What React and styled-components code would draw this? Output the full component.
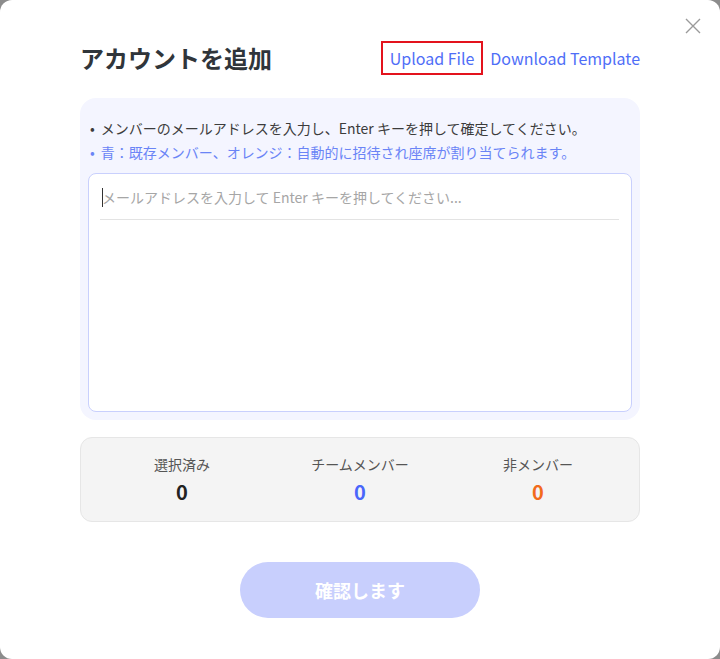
import React from 'react'
import styled, { createGlobalStyle } from 'styled-components'

const GlobalStyle = createGlobalStyle`
  html, body {
    margin: 0;
    padding: 0;
    background: #8c8c8c;
  }
  * { box-sizing: border-box; }
`

const Modal = styled.div`
  position: relative;
  width: 720px;
  height: 659px;
  background: #fff;
  border-radius: 12px;
  padding: 41px 80px 41px;
  display: flex;
  flex-direction: column;
  font-family: "Noto Sans CJK JP", "Noto Sans", sans-serif;
`

const CloseButton = styled.button`
  position: absolute;
  top: 17px;
  right: 18px;
  width: 18px;
  height: 18px;
  padding: 0;
  border: none;
  background: none;
  cursor: pointer;
  display: flex;
  align-items: center;
  justify-content: center;
`

const Header = styled.div`
  display: flex;
  align-items: center;
  justify-content: space-between;
  height: 34px;
`

const Title = styled.h2`
  margin: 0;
  font-size: 24px;
  font-weight: 700;
  color: #30353a;
  line-height: 32px;
`

const Links = styled.div`
  display: flex;
  align-items: center;
  gap: 6px;
  margin-right: -2px;
`

const LinkButton = styled.button`
  border: ${p => (p.$boxed ? '2px solid #e3131d' : '2px solid transparent')};
  background: none;
  padding: 0 7px;
  height: 34px;
  font-family: "Noto Sans CJK JP", "Noto Sans", sans-serif;
  font-size: 16px;
  color: #4f6ef7;
  cursor: pointer;
  margin: ${p => (p.$boxed ? '0' : '0 -7px 0 -8px')};
`

const Panel = styled.div`
  margin-top: 23px;
  background: #f4f5ff;
  border-radius: 16px;
  padding: 18px 8px 8px;
`

const Hint = styled.div`
  font-size: 14px;
  line-height: 24px;
  color: ${p => (p.$blue ? '#6a84f6' : '#3c3c3c')};
  padding-left: 2px;
  &::before {
    content: '•';
    margin-right: 6px;
  }
`

const InputBox = styled.div`
  margin-top: 9px;
  height: 239px;
  background: #fff;
  border: 1px solid #c9d0fd;
  border-radius: 8px;
  padding: 0 12px 0 11px;
`

const EmailInput = styled.input`
  display: block;
  width: 100%;
  border: none;
  border-bottom: 1px solid #e3e3e3;
  outline: none;
  padding: 12px 0 11px 2px;
  height: 46px;
  font-family: "Noto Sans CJK JP", "Noto Sans", sans-serif;
  font-size: 14px;
  color: #333;
  background: transparent;
  caret-color: #333;
  &::placeholder {
    color: #a6a6a6;
  }
`

const Caret = styled.span`
  position: absolute;
  left: 2px;
  top: 14px;
  width: 1px;
  height: 19px;
  background: #333;
`

const InputWrap = styled.div`
  position: relative;
`

const Stats = styled.div`
  margin-top: 17px;
  background: #f4f4f4;
  border: 1px solid #e6e6e6;
  border-radius: 12px;
  padding: 15px 12px 15px;
  display: grid;
  grid-template-columns: repeat(3, 1fr);
`

const Stat = styled.div`
  display: flex;
  flex-direction: column;
  align-items: center;
`

const StatLabel = styled.div`
  font-size: 14px;
  line-height: 22px;
  color: #555;
`

const StatValue = styled.div`
  margin-top: 3px;
  font-size: 20px;
  font-weight: 700;
  line-height: 28px;
  color: ${p => p.$color};
`

const Footer = styled.div`
  margin-top: auto;
  display: flex;
  justify-content: center;
`

const ConfirmButton = styled.button`
  width: 240px;
  height: 56px;
  border: none;
  border-radius: 28px;
  background: #c8cffd;
  color: #fff;
  font-family: "Noto Sans CJK JP", "Noto Sans", sans-serif;
  font-size: 18px;
  font-weight: 700;
  cursor: not-allowed;
`

const stats = [
  { label: '選択済み', value: 0, color: '#222' },
  { label: 'チームメンバー', value: 0, color: '#4a66fb' },
  { label: '非メンバー', value: 0, color: '#f26a1b' },
]

export default function App() {
  return (
    <>
      <GlobalStyle />
      <Modal>
        <CloseButton aria-label="close">
          <svg width="16" height="16" viewBox="0 0 16 16">
            <path d="M1 1 L15 15 M15 1 L1 15" stroke="#9a9a9a" strokeWidth="1.4" fill="none" />
          </svg>
        </CloseButton>
        <Header>
          <Title>アカウントを追加</Title>
          <Links>
            <LinkButton $boxed>Upload File</LinkButton>
            <LinkButton>Download Template</LinkButton>
          </Links>
        </Header>
        <Panel>
          <Hint>メンバーのメールアドレスを入力し、Enter キーを押して確定してください。</Hint>
          <Hint $blue>青：既存メンバー、オレンジ：自動的に招待され座席が割り当てられます。</Hint>
          <InputBox>
            <InputWrap>
              <Caret />
              <EmailInput placeholder="メールアドレスを入力して Enter キーを押してください..." />
            </InputWrap>
          </InputBox>
        </Panel>
        <Stats>
          {stats.map(s => (
            <Stat key={s.label}>
              <StatLabel>{s.label}</StatLabel>
              <StatValue $color={s.color}>{s.value}</StatValue>
            </Stat>
          ))}
        </Stats>
        <Footer>
          <ConfirmButton>確認します</ConfirmButton>
        </Footer>
      </Modal>
    </>
  )
}
